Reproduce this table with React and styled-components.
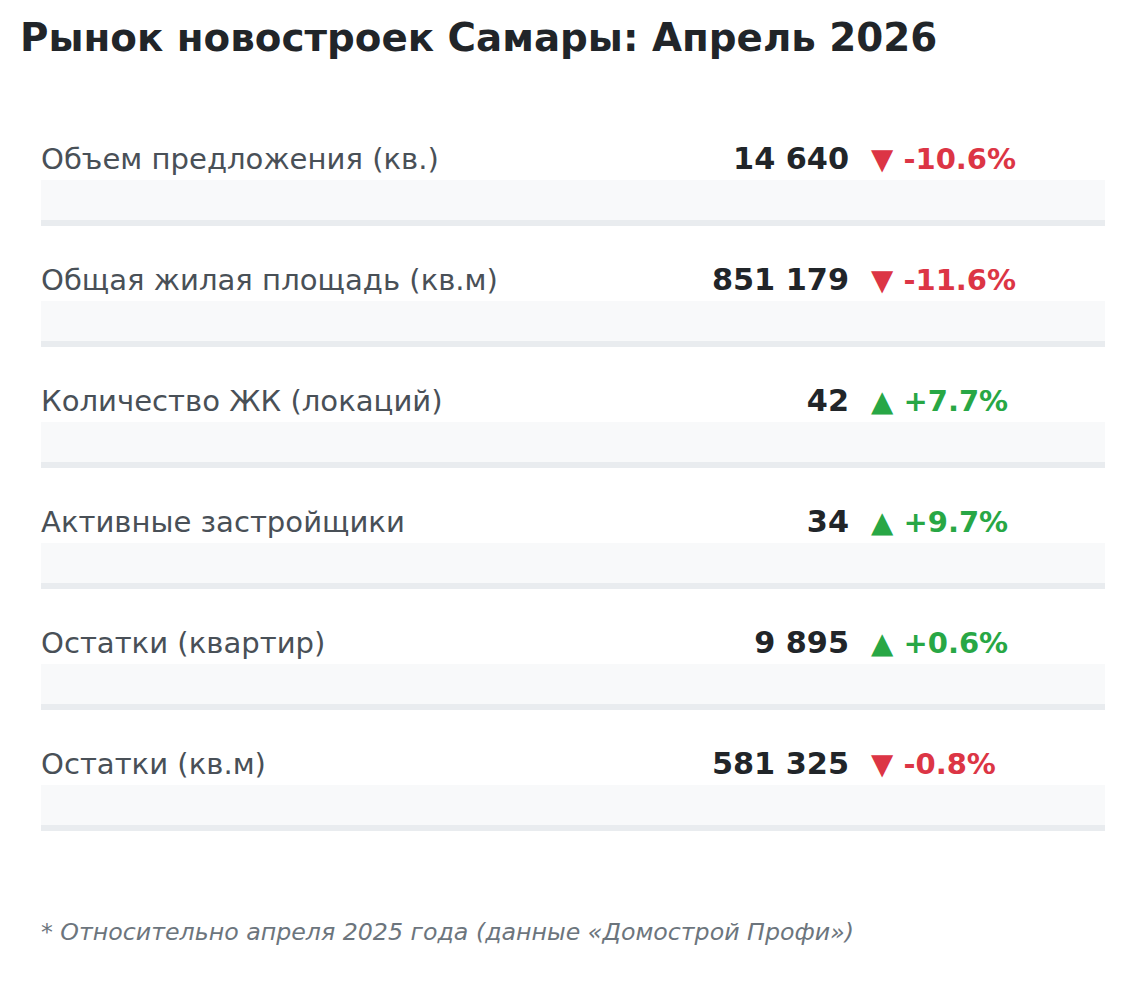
import React from "react";
import styled, { createGlobalStyle } from "styled-components";

const Global = createGlobalStyle`
  html, body { margin: 0; padding: 0; background: #ffffff; }
  body { font-family: "DejaVu Sans", "Liberation Sans", sans-serif; }
`;

const Page = styled.div`
  width: 1124px;
  height: 986px;
  box-sizing: border-box;
  padding: 14px 19px 0 20px;
  background: #fff;
`;

const Title = styled.h1`
  margin: 0;
  font-size: 38.8px;
  line-height: 48px;
  font-weight: 700;
  color: #212529;
`;

const List = styled.div`
  margin: 82px 0 0 21px;
  display: flex;
  flex-direction: column;
  gap: 39px;
`;

const Row = styled.div`
  display: flex;
  flex-direction: column;
  gap: 6px;
`;

const Head = styled.div`
  display: grid;
  grid-template-columns: 1fr auto 256px;
  align-items: center;
  align-content: start;
  height: 30px;
  line-height: 30px;
`;

const Label = styled.span`
  font-size: 29.1px;
  color: #495057;
  white-space: nowrap;
`;

const Value = styled.span`
  font-size: 30.3px;
  font-weight: 700;
  color: #212529;
  text-align: right;
  white-space: nowrap;
`;

const Change = styled.span`
  padding-left: 22px;
  font-size: 29px;
  font-weight: 700;
  color: ${(p) => (p.$up ? "#28a745" : "#dc3545")};
  white-space: nowrap;
`;

const Bar = styled.div`
  height: 40px;
  background: #f8f9fa;
  border-bottom: 6px solid #e9ecef;
`;

const Note = styled.p`
  margin: 87px 0 0 21px;
  font-size: 23.7px;
  line-height: 28px;
  font-style: italic;
  color: #6c757d;
`;

const rows = [
  { label: "Объем предложения (кв.)", value: "14 640", change: "-10.6%", up: false },
  { label: "Общая жилая площадь (кв.м)", value: "851 179", change: "-11.6%", up: false },
  { label: "Количество ЖК (локаций)", value: "42", change: "+7.7%", up: true },
  { label: "Активные застройщики", value: "34", change: "+9.7%", up: true },
  { label: "Остатки (квартир)", value: "9 895", change: "+0.6%", up: true },
  { label: "Остатки (кв.м)", value: "581 325", change: "-0.8%", up: false },
];

export default function App() {
  return (
    <Page>
      <Global />
      <Title>Рынок новостроек Самары: Апрель 2026</Title>
      <List>
        {rows.map((r) => (
          <Row key={r.label}>
            <Head>
              <Label>{r.label}</Label>
              <Value>{r.value}</Value>
              <Change $up={r.up}>
                {r.up ? "▲" : "▼"} {r.change}
              </Change>
            </Head>
            <Bar />
          </Row>
        ))}
      </List>
      <Note>* Относительно апреля 2025 года (данные «Домострой Профи»)</Note>
    </Page>
  );
}
